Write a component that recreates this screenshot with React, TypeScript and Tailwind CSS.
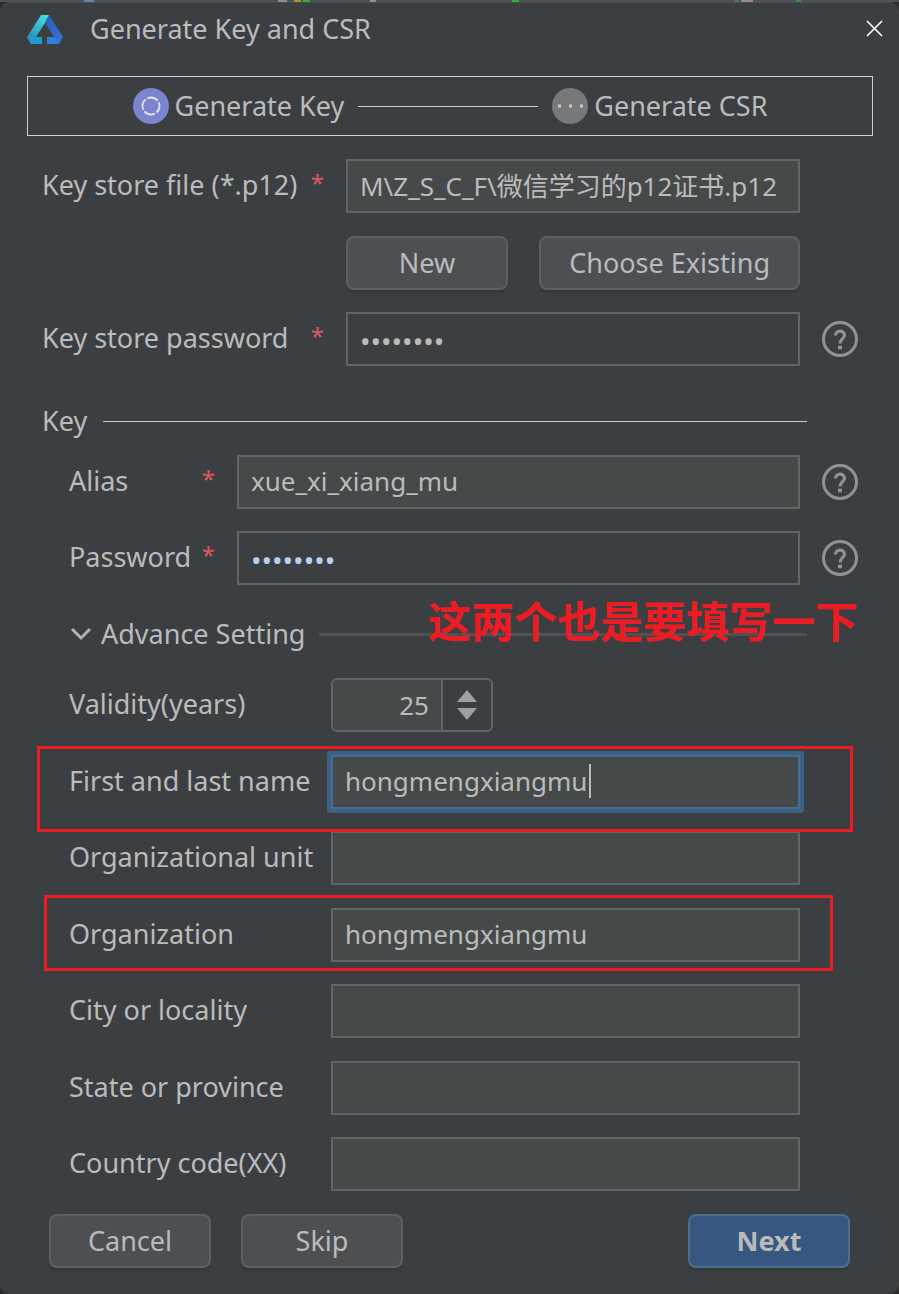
import { useState } from "react";
import type { ReactNode } from "react";

const inputBase = "h-[54px] w-full min-w-0 border-2 px-3 outline-none";
const textInput = `${inputBase} border-[#646464] bg-[#45494a] pb-[2px] text-[26px]`;
const passwordInput = `${inputBase} mr-[22px] border-[#646464] bg-[#3c3f41] pt-1 text-[28px]`;

function Logo() {
  return (
    <svg width="36" height="30" viewBox="0 0 36 30" aria-hidden="true">
      <defs>
        <linearGradient id="logo-left" x1="0.7" y1="0" x2="0.2" y2="1">
          <stop stopColor="#48d8e4" offset="0%" />
          <stop stopColor="#1d86b0" offset="100%" />
        </linearGradient>
        <linearGradient id="logo-right" x1="0.2" y1="0" x2="0.8" y2="1">
          <stop stopColor="#2062b4" offset="0%" />
          <stop stopColor="#4170d4" offset="100%" />
        </linearGradient>
      </defs>
      <path d="M14 0H22L18 8L9 22L4 29L0 22Z" fill="url(#logo-left)" />
      <path d="M22 0L36 22L32 29L27 22L18 8Z" fill="url(#logo-right)" />
      <path d="M0 22H15V29H4Z" fill="#1f9bd0" />
      <path d="M20 22H28L32 29H20Z" fill="#2f82dc" />
    </svg>
  );
}

function HelpButton({ label }: { label: string }) {
  return (
    <button type="button" aria-label={label} className="shrink-0">
      <svg width="36" height="36" viewBox="0 0 36 36" fill="none" stroke="#919293" aria-hidden="true">
        <circle cx="18" cy="18" r="16.500" strokeWidth="3" />
        <path d="M13.500 14.500C13.500 8.800 22.500 8.800 22.500 14.200C22.500 17.500 18 18 18 22.500" strokeWidth="3.200" />
        <path d="M16 26.500H20" strokeWidth="3.600" />
      </svg>
    </button>
  );
}

function Star() {
  return <span className="text-2xl text-[#db5860]">*</span>;
}

function Button({ children, primary }: { children: ReactNode; primary?: boolean }) {
  return (
    <button
      type="button"
      className={
        primary
          ? "h-[54px] w-[162px] rounded-lg border-2 border-[#4c708c] bg-[#365880] font-bold shadow-[0_3px_1px_#37383a]"
          : "h-[54px] min-w-[162px] rounded-lg border-2 border-[#5e6060] bg-[#4c5052] px-7 shadow-[0_3px_1px_#37383a]"
      }
    >
      {children}
    </button>
  );
}

// One line of the advanced block: fixed label column, field takes the rest
function AdvancedRow({ id, label, children }: { id: string; label: string; children: ReactNode }) {
  return (
    <div className="relative flex items-center">
      <label htmlFor={id} className="w-[262px] shrink-0 pb-[2px]">{label}</label>
      {children}
    </div>
  );
}

function AdvancedInput({ id, value = "" }: { id: string; value?: string }) {
  return <input id={id} type="text" defaultValue={value} className={textInput} />;
}

export default function App() {
  const [years, setYears] = useState(25);

  return (
    <div className="flex min-h-screen flex-col bg-[#2b2b2b] font-['Noto_Sans','Noto_Sans_CJK_SC',sans-serif] text-[27px] leading-9 text-[#bbbbbb]">
      {/* Sliver of the window behind the dialog */}
      <div className="flex h-[2px] bg-[#4e5254]">
        <svg width="899" height="2" viewBox="0 0 899 2" aria-hidden="true">
          <path d="M84 1H94" stroke="#6288ad" strokeWidth="2" />
          <path d="M278 1H287" stroke="#8d8d8d" strokeWidth="2" />
          <path d="M294 1H301" stroke="#a89032" strokeWidth="2" />
          <path d="M303 1H310M512 1H519" stroke="#2fb52f" strokeWidth="2" />
          <path d="M370 1H376M741 1H753" stroke="#8d8d8d" strokeWidth="2" />
          <path d="M735 1H739M796 1H801" stroke="#3f8a42" strokeWidth="2" />
        </svg>
      </div>

      <form className="flex flex-1 flex-col rounded-[10px] border-t border-[#4a4d4f] bg-[#3c3f41]">
        <header className="flex h-[53px] items-center pr-4 pl-[27px]">
          <Logo />
          <h1 className="ml-[27px] flex-1 pb-[2px]">Generate Key and CSR</h1>
          <button type="button" aria-label="Close" className="pb-[2px]">
            <svg width="17" height="17" viewBox="0 0 17 17" stroke="#ffffff" strokeWidth="1.600" aria-hidden="true">
              <path d="M1 1L16 16M16 1L1 16" />
            </svg>
          </button>
        </header>

        {/* Steps */}
        <ol className="mt-5 mr-[26px] ml-[27px] flex h-[60px] items-center justify-center border border-[#d0d0d0]">
          <li className="flex items-center gap-[6px]">
            <svg width="36" height="36" viewBox="0 0 36 36" aria-hidden="true">
              <circle cx="18" cy="18" r="18" fill="#7b84cc" />
              <circle cx="18" cy="18" r="8.500" fill="none" stroke="#e4e6f8" strokeWidth="1.800" strokeDasharray="11.300 2.050" strokeDashoffset="4" />
            </svg>
            Generate Key
          </li>
          <li aria-hidden="true" className="mx-[14px] h-px w-[180px] bg-[#c8c8c8]" />
          <li className="flex items-center gap-[6px]">
            <svg width="36" height="36" viewBox="0 0 36 36" aria-hidden="true">
              <circle cx="18" cy="18" r="18" fill="#77787a" />
              <path d="M6 18H9M17 18H20M28 18H31" stroke="#c9c9c9" strokeWidth="3" />
            </svg>
            Generate CSR
          </li>
        </ol>

        <div className="flex flex-1 flex-col pt-[23px] pr-[41px] pl-[42px]">
          <div className="flex items-center pr-[58px]">
            <label htmlFor="store-file" className="flex w-[304px] shrink-0 justify-between pr-[22px] pb-[2px]">
              Key store file (*.p12) <Star />
            </label>
            <input id="store-file" type="text" defaultValue="M\Z_S_C_F\微信学习的p12证书.p12" className={textInput} />
          </div>

          <div className="mt-[23px] flex justify-between pr-[58px] pl-[304px]">
            <Button>New</Button>
            <Button>Choose Existing</Button>
          </div>

          <div className="mt-[22px] flex items-center">
            <label htmlFor="store-password" className="flex w-[304px] shrink-0 justify-between pr-[22px] pb-[2px]">
              Key store password <Star />
            </label>
            <input id="store-password" type="password" defaultValue="12345678" className={passwordInput} />
            <HelpButton label="Key store password help" />
          </div>

          {/* Key */}
          <div className="mt-[37px] flex items-center gap-4 pr-[51px]">
            <h2>Key</h2>
            <div className="h-px flex-1 bg-[#c8c8c8]" />
          </div>

          <div className="mt-4 flex items-center pl-[27px]">
            <label htmlFor="alias" className="flex w-[168px] shrink-0 justify-between pr-[22px] pb-[2px]">
              Alias <Star />
            </label>
            <input id="alias" type="text" defaultValue="xue_xi_xiang_mu" className={`${textInput} mr-[22px]`} />
            <HelpButton label="Alias help" />
          </div>

          <div className="mt-[22px] flex items-center pl-[27px]">
            <label htmlFor="key-password" className="flex w-[168px] shrink-0 justify-between pr-[22px] pb-[2px]">
              Password <Star />
            </label>
            <input id="key-password" type="password" defaultValue="12345678" className={`${passwordInput} text-[#b8d0ea]`} />
            <HelpButton label="Password help" />
          </div>

          {/* Advanced */}
          <div className="relative mt-[31px] flex items-center gap-[14px] pr-[51px] pl-[27px]">
            <button type="button" aria-expanded="true" className="flex items-center gap-[8px]">
              <svg width="24" height="24" viewBox="0 0 24 24" fill="none" stroke="#b0b2b4" strokeWidth="3" aria-hidden="true">
                <path d="M3 7L12 16L21 7" />
              </svg>
              Advance Setting
            </button>
            <div className="h-[3px] flex-1 bg-[#515151]" />
            <p className="absolute -top-[22px] right-0 text-[43px] leading-[56px] font-bold text-[#ed1c24]">这两个也是要填写一下</p>
          </div>

          <div className="mt-[26px] flex flex-1 flex-col justify-between pr-[58px] pl-[27px]">
            <AdvancedRow id="validity" label="Validity(years)">
              <div className="flex h-[54px] w-[162px] rounded-md border-2 border-[#646464]">
                <input
                  id="validity"
                  type="number"
                  value={years}
                  onChange={(e) => setYears(Number(e.target.value))}
                  className="w-[110px] rounded-l-sm border-r-2 border-[#646464] bg-[#45494a] pr-3 text-right text-[26px] outline-none [appearance:textfield] [&::-webkit-inner-spin-button]:appearance-none"
                />
                <div className="flex flex-1 flex-col items-center justify-center gap-[6px]">
                  <button type="button" aria-label="More years" onClick={() => setYears(years + 1)}>
                    <svg width="22" height="12" viewBox="0 0 22 12" fill="#9ea1a4" className="block" aria-hidden="true">
                      <path d="M11 0L21 12H1Z" />
                    </svg>
                  </button>
                  <button type="button" aria-label="Fewer years" onClick={() => setYears(years - 1)}>
                    <svg width="22" height="12" viewBox="0 0 22 12" fill="#9ea1a4" className="block" aria-hidden="true">
                      <path d="M1 0H21L11 12Z" />
                    </svg>
                  </button>
                </div>
              </div>
            </AdvancedRow>

            <AdvancedRow id="full-name" label="First and last name">
              <div className="relative flex-1">
                <input
                  id="full-name"
                  type="text"
                  defaultValue="hongmengxiangmu"
                  className={`${inputBase} block rounded-[1px] border-[#466d94] bg-[#45494a] pb-[2px] text-[26px] ring-4 ring-[#3d6185]`}
                />
                <span className="absolute top-[9px] left-[258px] h-[34px] w-[2px] bg-[#bbbbbb]" />
              </div>
              <div className="pointer-events-none absolute -top-[9px] -right-[53px] -bottom-[23px] -left-[32px] z-10 border-3 border-[#ed1c24]" />
            </AdvancedRow>

            <AdvancedRow id="unit" label="Organizational unit">
              <AdvancedInput id="unit" />
            </AdvancedRow>

            <AdvancedRow id="organization" label="Organization">
              <AdvancedInput id="organization" value="hongmengxiangmu" />
              <div className="pointer-events-none absolute -top-[13px] -right-[33px] -bottom-[9px] -left-[25px] z-10 border-3 border-[#ed1c24]" />
            </AdvancedRow>

            <AdvancedRow id="city" label="City or locality">
              <AdvancedInput id="city" />
            </AdvancedRow>

            <AdvancedRow id="state" label="State or province">
              <AdvancedInput id="state" />
            </AdvancedRow>

            <AdvancedRow id="country" label="Country code(XX)">
              <AdvancedInput id="country" />
            </AdvancedRow>
          </div>
        </div>

        <footer className="mt-[23px] mb-[26px] flex gap-[30px] px-[49px]">
          <Button>Cancel</Button>
          <Button>Skip</Button>
          <div className="flex-1" />
          <Button primary>Next</Button>
        </footer>
      </form>
    </div>
  );
}
